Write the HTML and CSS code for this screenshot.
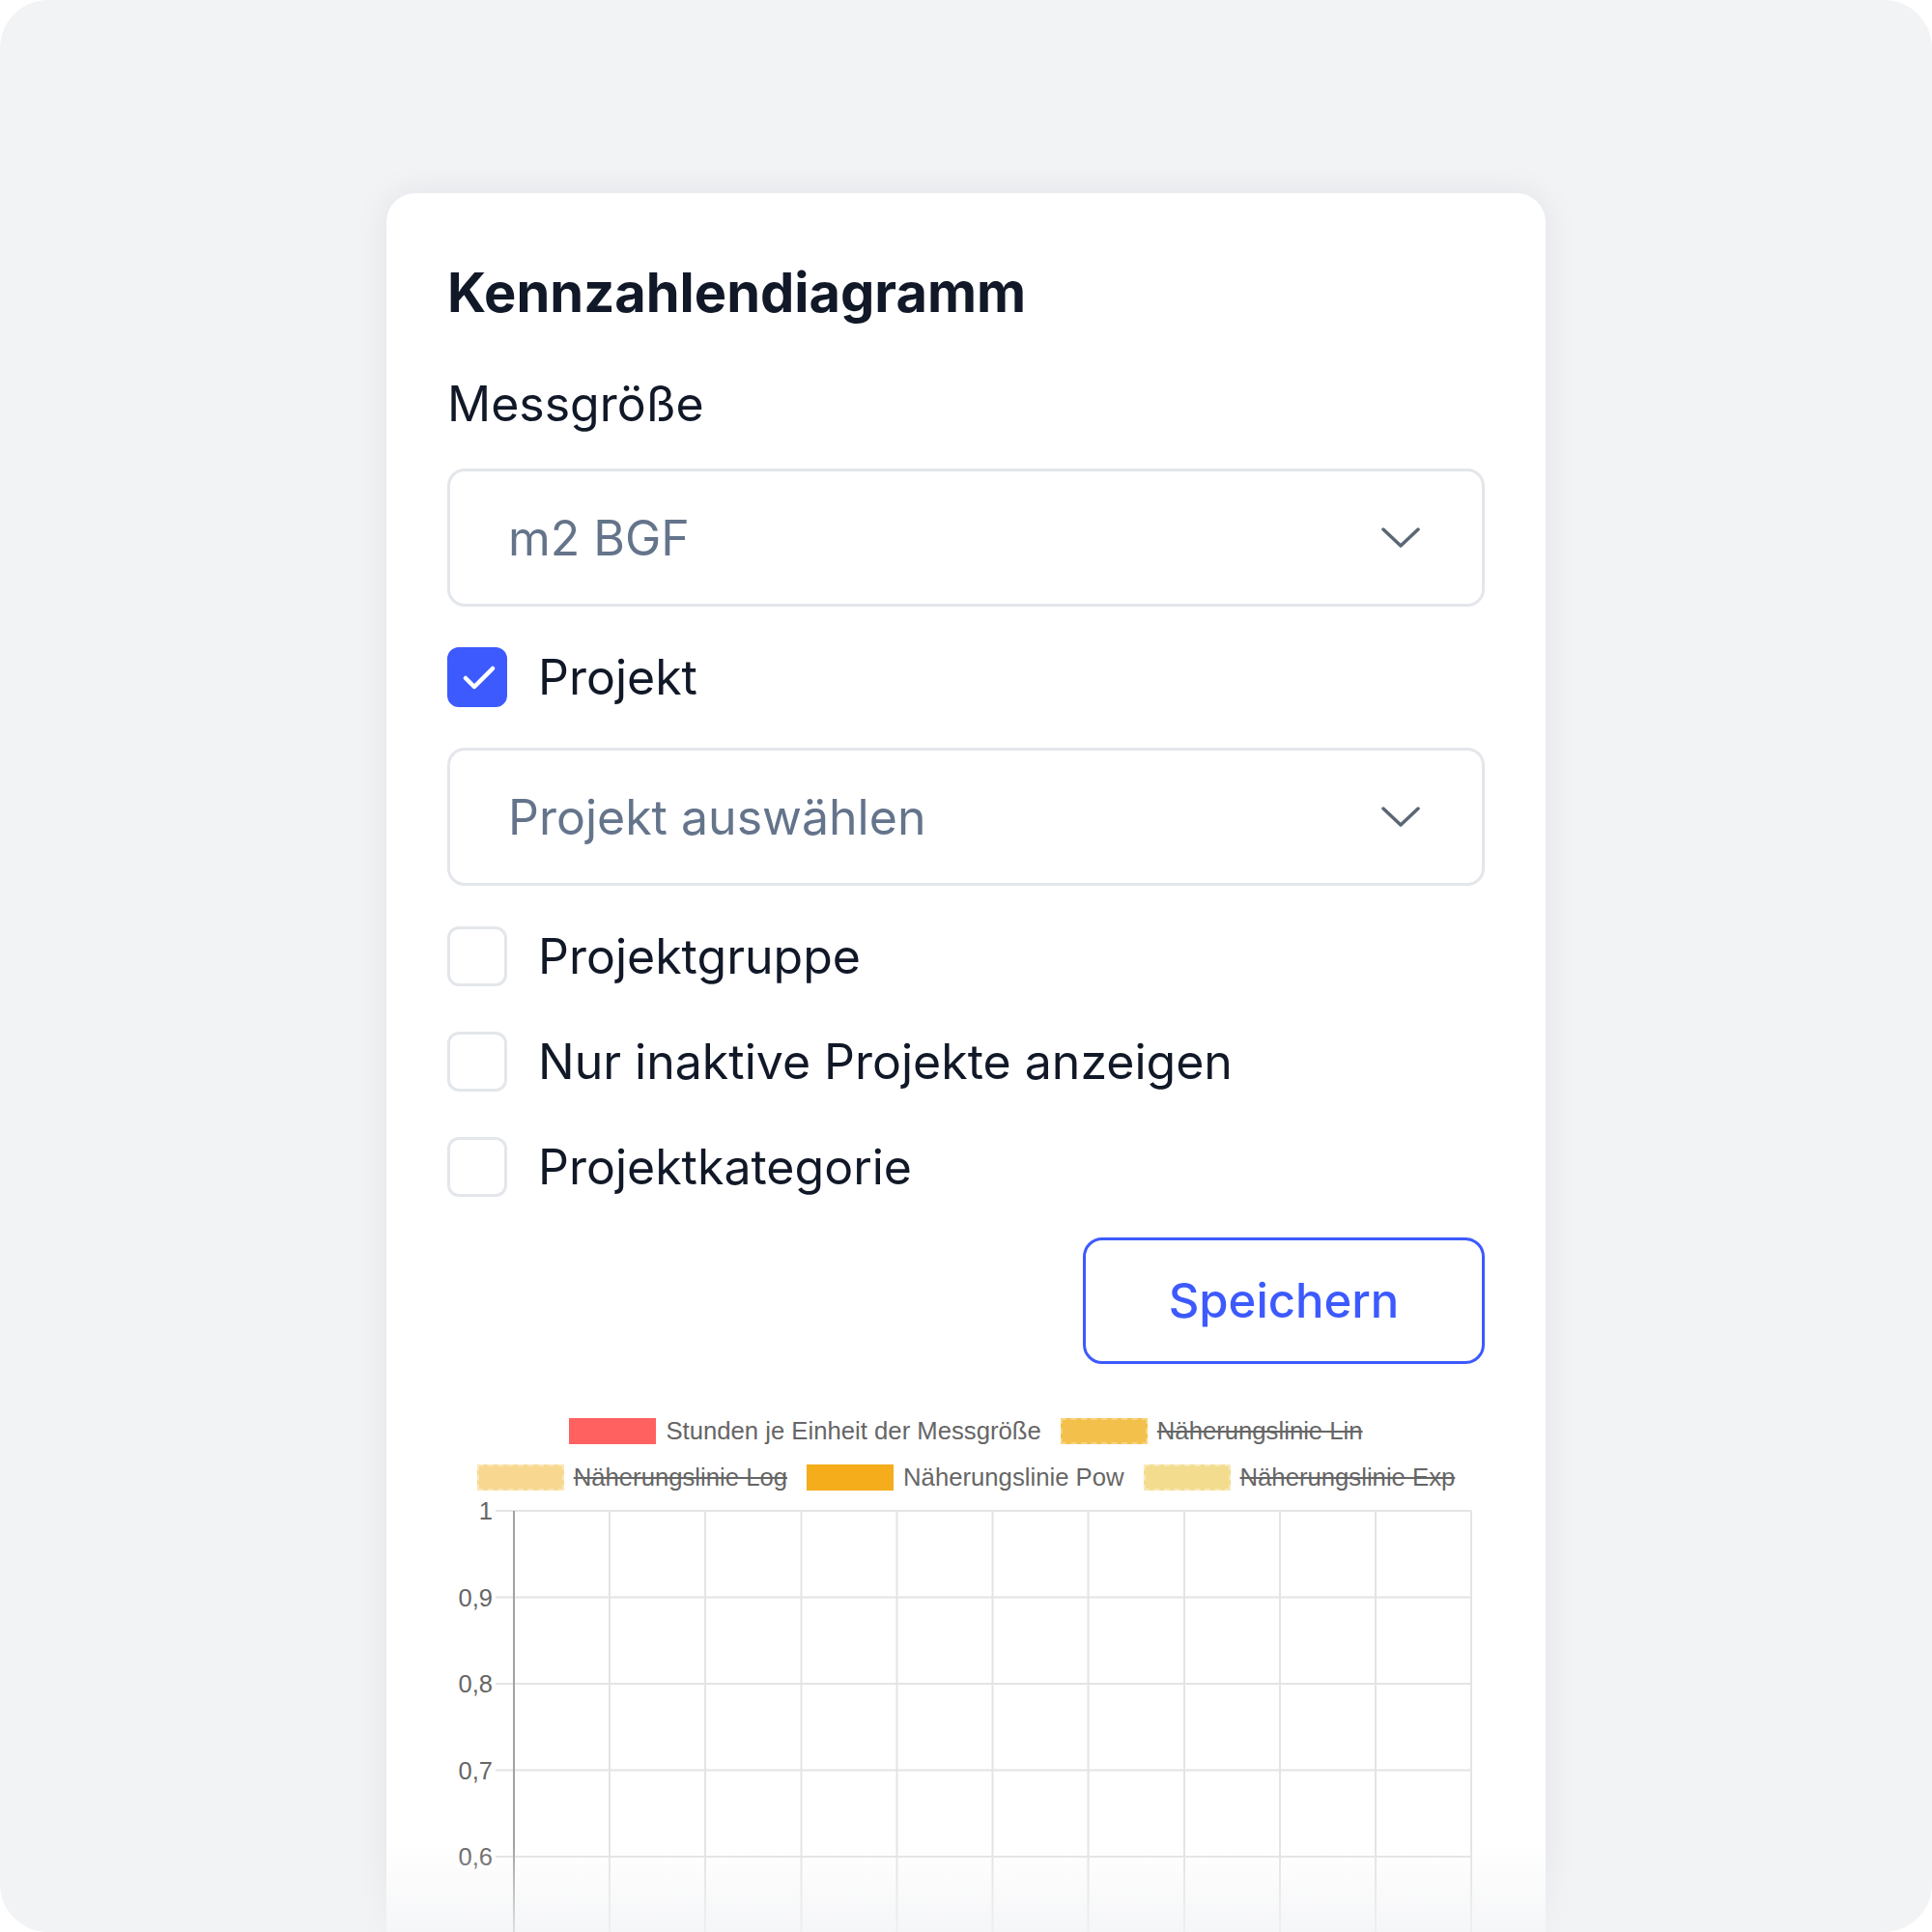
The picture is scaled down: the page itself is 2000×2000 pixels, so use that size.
FILE: index.html
```html
<!DOCTYPE html>
<html lang="de">
<head>
<meta charset="utf-8">
<title>Kennzahlendiagramm</title>
<link rel="stylesheet" href="styles.css">
</head>
<body>
<div class="frame">
  <div class="card">
    <h1 class="title">Kennzahlendiagramm</h1>
    <div class="field-label">Messgröße</div>
    <div class="form">
      <div class="select">
        <span class="select-text">m2 BGF</span>
        <svg class="chevron" width="40" height="22" viewBox="0 0 40 22"><path d="M2 2 L20 19 L38 2" fill="none" stroke="#5b6774" stroke-width="3.5" stroke-linecap="round" stroke-linejoin="round"/></svg>
      </div>
      <label class="check-row">
        <span class="box checked"><svg width="62" height="62" viewBox="0 0 62 62"><polyline points="19,32 28,41 47,22" fill="none" stroke="#fff" stroke-width="4.5" stroke-linecap="round" stroke-linejoin="round"/></svg></span>
        <span class="check-text">Projekt</span>
      </label>
      <div class="select">
        <span class="select-text">Projekt auswählen</span>
        <svg class="chevron" width="40" height="22" viewBox="0 0 40 22"><path d="M2 2 L20 19 L38 2" fill="none" stroke="#5b6774" stroke-width="3.5" stroke-linecap="round" stroke-linejoin="round"/></svg>
      </div>
      <label class="check-row">
        <span class="box"></span>
        <span class="check-text">Projektgruppe</span>
      </label>
      <label class="check-row">
        <span class="box"></span>
        <span class="check-text">Nur inaktive Projekte anzeigen</span>
      </label>
      <label class="check-row">
        <span class="box"></span>
        <span class="check-text">Projektkategorie</span>
      </label>
      <div class="actions">
        <button class="btn">Speichern</button>
      </div>
    </div>

    <div class="chart">
      <div class="legend">
        <div class="legend-row">
          <div class="legend-item"><span class="swatch red"></span><span class="legend-text">Stunden je Einheit der Messgröße</span></div>
          <div class="legend-item"><span class="swatch lin"></span><span class="legend-text off">Näherungslinie Lin</span></div>
        </div>
        <div class="legend-row">
          <div class="legend-item"><span class="swatch log"></span><span class="legend-text off">Näherungslinie Log</span></div>
          <div class="legend-item"><span class="swatch pow"></span><span class="legend-text">Näherungslinie Pow</span></div>
          <div class="legend-item"><span class="swatch exp"></span><span class="legend-text off">Näherungslinie Exp</span></div>
        </div>
      </div>
      <svg class="plot" width="1074" height="500" viewBox="0 0 1074 500">
        <g stroke="#e4e4e4" stroke-width="2">
          <line x1="50" y1="20" x2="1060" y2="20"/>
          <line x1="50" y1="109.5" x2="1060" y2="109.5"/>
          <line x1="50" y1="199" x2="1060" y2="199"/>
          <line x1="50" y1="288.5" x2="1060" y2="288.5"/>
          <line x1="50" y1="378" x2="1060" y2="378"/>
          <line x1="50" y1="467.5" x2="1060" y2="467.5"/>
          <line x1="168" y1="20" x2="168" y2="500"/>
          <line x1="267" y1="20" x2="267" y2="500"/>
          <line x1="366.5" y1="20" x2="366.5" y2="500"/>
          <line x1="465.5" y1="20" x2="465.5" y2="500"/>
          <line x1="564.5" y1="20" x2="564.5" y2="500"/>
          <line x1="663.5" y1="20" x2="663.5" y2="500"/>
          <line x1="763" y1="20" x2="763" y2="500"/>
          <line x1="862" y1="20" x2="862" y2="500"/>
          <line x1="961" y1="20" x2="961" y2="500"/>
          <line x1="1060" y1="20" x2="1060" y2="500"/>
        </g>
        <line x1="69" y1="20" x2="69" y2="500" stroke="#a3a3a3" stroke-width="2"/>
        <g font-family="Liberation Sans, Arial, sans-serif" font-size="25.5" fill="#666" text-anchor="end">
          <text x="47" y="29">1</text>
          <text x="47" y="118.5">0,9</text>
          <text x="47" y="208">0,8</text>
          <text x="47" y="297.5">0,7</text>
          <text x="47" y="387">0,6</text>
        </g>
      </svg>
    </div>
  </div>
  <div class="fade"></div>
</div>
</body>
</html>
```

FILE: styles.css
```css
* { box-sizing: border-box; }

html, body {
  margin: 0;
  padding: 0;
  background: #ffffff;
}

.frame {
  position: relative;
  width: 2000px;
  height: 2000px;
  background: #f2f3f5;
  border-radius: 50px;
  overflow: hidden;
  padding-top: 200px;
  padding-left: 400px;
  font-family: Inter, "Noto Sans", sans-serif;
}

.card {
  width: 1200px;
  min-height: 1900px;
  background: #ffffff;
  border-radius: 30px 30px 0 0;
  box-shadow: 0 0 36px rgba(17, 24, 39, 0.07);
  padding: 69px 63px 0 63px;
}

.title {
  margin: 0;
  font-size: 56px;
  line-height: 68px;
  font-weight: 700;
  color: #111827;
  letter-spacing: 0;
}

.field-label {
  margin-top: 45px;
  font-size: 50px;
  line-height: 72px;
  color: #111827;
}

.form {
  margin-top: 31px;
  display: flex;
  flex-direction: column;
  gap: 37px;
}

.select {
  height: 143px;
  border: 3px solid #e3e6ea;
  border-radius: 18px;
  display: flex;
  align-items: center;
  justify-content: space-between;
  padding: 0 64px 0 60px;
}

.select-text {
  font-size: 50px;
  line-height: 72px;
  color: #64748b;
}

.chevron { display: block; }

.check-row {
  display: flex;
  align-items: center;
  height: 72px;
  gap: 32px;
}

.box {
  width: 62px;
  height: 62px;
  flex: none;
  border: 3px solid #e3e6ea;
  border-radius: 12px;
  background: #fff;
  position: relative;
}

.box.checked {
  background: #3d5afe;
  border-color: #3d5afe;
}

.box.checked svg {
  position: absolute;
  left: -3px;
  top: -3px;
}

.check-text {
  font-size: 50px;
  line-height: 72px;
  color: #111827;
}

.actions {
  display: flex;
  justify-content: flex-end;
}

.btn {
  width: 416px;
  height: 131px;
  border: 3px solid #3d5afe;
  border-radius: 20px;
  background: #fff;
  color: #3d5afe;
  font-family: Inter, "Noto Sans", sans-serif;
  font-size: 49px;
  font-weight: 500;
  padding: 0;
}

.chart {
  margin-top: 45px;
}

.legend {
  display: flex;
  flex-direction: column;
  align-items: center;
}

.legend-row {
  display: flex;
  gap: 20px;
  height: 48px;
  align-items: center;
}

.legend-item {
  display: flex;
  align-items: center;
  gap: 10px;
}

.swatch {
  width: 90px;
  height: 27px;
  display: block;
}

.swatch.red { background: #ff6161; }
.swatch.lin { background: #f3c04b; border: 2px dashed #f7d382; }
.swatch.log { background: #f8d891; border: 2px dashed #fbe6b5; }
.swatch.pow { background: #f5ad1c; }
.swatch.exp { background: #f3dc8d; border: 2px dashed #f8e9b8; }

.legend-text {
  font-family: "Liberation Sans", Arial, sans-serif;
  font-size: 25.7px;
  line-height: 30px;
  color: #666666;
}

.legend-text.off {
  text-decoration: line-through;
  text-decoration-thickness: 2px;
}

.plot {
  display: block;
  margin-top: -9px;
}

.fade {
  position: absolute;
  left: 0;
  right: 0;
  bottom: 0;
  height: 90px;
  background: linear-gradient(to bottom, rgba(242, 243, 245, 0), rgba(242, 243, 245, 0.75));
  pointer-events: none;
}
```
